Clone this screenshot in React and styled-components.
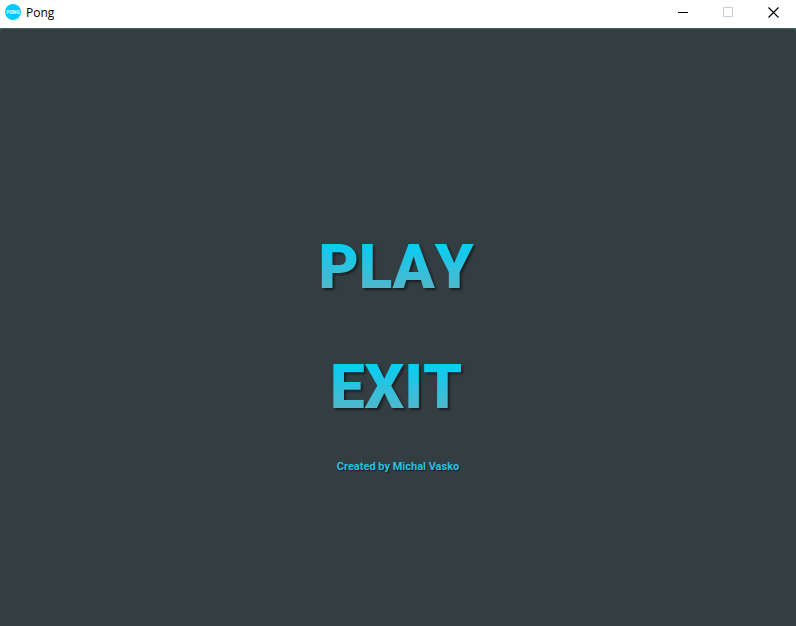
import React from 'react';
import styled, { createGlobalStyle } from 'styled-components';

const GlobalStyle = createGlobalStyle`
  * { box-sizing: border-box; }
  body { margin: 0; background: #333e42; }
`;

const Window = styled.div`
  display: flex;
  flex-direction: column;
  min-height: 100vh;
  background: #4a6466;
`;

const TitleBar = styled.header`
  display: flex;
  align-items: center;
  height: 28px;
  padding-left: 5px;
  background: #fff;
  color: #000;
`;

const AppIcon = styled.svg`
  width: 16px;
  height: 16px;
  margin-bottom: 4px;
`;

const Title = styled.h1`
  flex: 1;
  margin: 0 0 2px 5px;
  font: 400 12px/16px "Open Sans", "Noto Sans", sans-serif;
`;

const WindowButton = styled.button`
  display: flex;
  align-items: center;
  justify-content: center;
  width: 45px;
  height: 24px;
  margin-bottom: 4px;
  padding: 0;
  border: 0;
  background: none;
  color: ${(p) => (p.disabled ? '#ccc' : '#000')};
`;

const Glyph = styled.svg`
  width: 11px;
  height: 11px;
  fill: none;
  stroke: currentColor;
`;

const Menu = styled.main`
  flex: 1;
  display: flex;
  flex-direction: column;
  align-items: center;
  justify-content: center;
  margin-top: 1px;
  padding-top: 50px;
  border-radius: 3px 3px 0 0;
  background: #333e42;
  font-family: Roboto, sans-serif;
`;

const MenuButton = styled.button`
  margin-bottom: 50px;
  padding: 0 4px 0 0;
  border: 0;
  background: linear-gradient(#08cdf2 20%, #5cb4c6 90%);
  background-clip: text;
  color: transparent;
  font: 900 62px/70px Roboto, sans-serif;
  font-kerning: none;
  filter: drop-shadow(2px 2px 1px rgba(0, 0, 0, 0.5));
  cursor: pointer;

  &:last-of-type { margin-bottom: 38px; }
`;

const Credit = styled.p`
  margin: 0;
  color: #2cc0de;
  font-size: 11px;
  font-weight: 700;
  line-height: 14px;
  text-shadow: 1px 1px 1px rgba(0, 0, 0, 0.5);
`;

export default function App() {
  return (
    <Window>
      <GlobalStyle />
      <TitleBar>
        <AppIcon viewBox="0 0 16 16" aria-hidden="true">
          <circle cx="8" cy="8" r="8" fill="#00cbff" />
          <text x="8" y="10" textAnchor="middle" fontFamily="Roboto, sans-serif" fontWeight="700" fontSize="5" fill="#e8faff">PONG</text>
        </AppIcon>
        <Title>Pong</Title>
        <WindowButton aria-label="Minimize"><Glyph><path d="M0 5.5h10" /></Glyph></WindowButton>
        <WindowButton aria-label="Maximize" disabled><Glyph><path d="M.5.5h9v9h-9z" /></Glyph></WindowButton>
        <WindowButton aria-label="Close"><Glyph strokeWidth="1.2"><path d="M.5.5l10 10M10.5.5l-10 10" /></Glyph></WindowButton>
      </TitleBar>
      <Menu>
        <MenuButton>PLAY</MenuButton>
        <MenuButton>EXIT</MenuButton>
        <Credit>Created by Michal Vasko</Credit>
      </Menu>
    </Window>
  );
}
